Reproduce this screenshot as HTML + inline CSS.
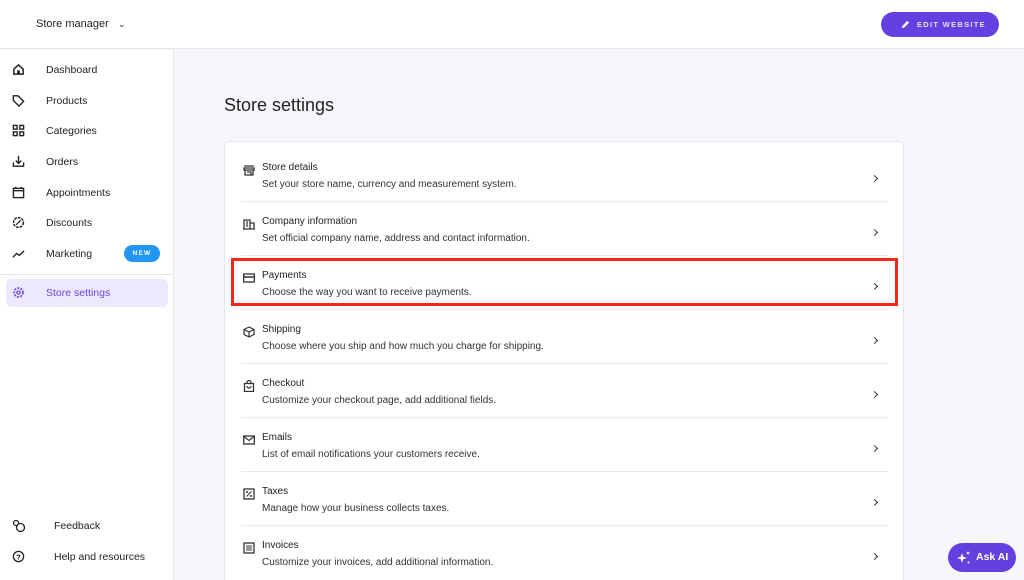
<!DOCTYPE html>
<html><head><meta charset="utf-8"><style>
*{box-sizing:border-box;margin:0;padding:0}
html,body{width:1024px;height:580px;overflow:hidden}
body{font-family:"Liberation Sans",Arial,sans-serif;background:#f6f7fb;color:#222;position:relative}
.hdr{position:absolute;left:0;top:0;width:1024px;height:49px;background:#fff;border-bottom:1px solid #e6e7ec}
.hdr .sm{position:absolute;left:36px;top:18px;font-size:11px;color:#222}
.edit{position:absolute;left:881px;top:12px;width:118px;height:25px;border-radius:13px;background:#6440e0;color:#e8e2ff;font-size:7.5px;font-weight:bold;letter-spacing:1.3px;line-height:25px;padding-left:36px}
.side{position:absolute;left:0;top:50px;width:174px;height:530px;background:#fff;border-right:1px solid #e6e7ec}
.it{position:absolute;left:0;height:20px;width:174px;font-size:10.5px;line-height:20px}
.it span{position:absolute;left:46px}
.it svg{position:absolute;left:12px;top:3px}
.new{position:absolute;left:124px;top:1px;width:36px;height:17px;border-radius:9px;background:#2196f3;color:#fff;font-size:6.5px;font-weight:bold;letter-spacing:1.2px;text-align:center;line-height:17px}
.sel{position:absolute;left:6px;top:229px;width:162px;height:28px;border-radius:5px;background:#ede8fd}
h1{position:absolute;left:224px;top:95px;font-size:18px;font-weight:normal;color:#222}
.card{position:absolute;left:224px;top:141px;width:680px;height:450px;background:#fff;border:1px solid #e6e7ec;border-radius:4px}
.row{position:absolute;left:16px;width:647px;height:54px;border-bottom:1px solid #e8e9ee}
.row .t{position:absolute;left:21px;top:14px;font-size:10px;color:#222}
.row .d{position:absolute;left:21px;top:31px;font-size:10px;color:#333}
.row svg.i{position:absolute;left:2px;top:16px}
.row .ch{position:absolute;right:11px;top:28px;width:5px;height:5px;border-right:1.5px solid #333;border-top:1.5px solid #333;transform:rotate(45deg)}
.red{position:absolute;left:231px;top:258px;width:667px;height:48px;border:3px solid #f4271a}
.ask{position:absolute;left:948px;top:543px;width:68px;height:29px;border-radius:15px;background:#6440e0;color:#fff;font-size:10.5px;font-weight:bold;line-height:29px;padding-left:28px}
</style></head><body>
<div class="hdr"><div class="sm">Store manager &nbsp;&nbsp;<span style="font-size:9px">⌄</span></div>
<div class="edit"><svg style="position:absolute;left:20px;top:8px" width="9" height="9" viewBox="0 0 10 10"><path d="M1 9l0.5-2.5 5.5-5.5 2 2-5.5 5.5z" fill="#fff"/></svg>EDIT WEBSITE</div></div>
<div class="side">
<div class="it" style="top:10px"><svg width="13" height="13" viewBox="0 0 14 14"><path d="M2 6.5L7 2l5 4.5V12H2z" fill="none" stroke="#222" stroke-width="1.6"/><rect x="5.5" y="8" width="3" height="4" fill="#222"/></svg><span>Dashboard</span></div>
<div class="it" style="top:41px"><svg width="13" height="13" viewBox="0 0 14 14"><path d="M1.5 2v5l6 6 5-5-6-6z" fill="none" stroke="#222" stroke-width="1.5"/></svg><span>Products</span></div>
<div class="it" style="top:71px"><svg width="13" height="13" viewBox="0 0 14 14"><g fill="none" stroke="#222" stroke-width="1.5"><rect x="1.5" y="1.5" width="4" height="4"/><rect x="8.5" y="1.5" width="4" height="4"/><rect x="1.5" y="8.5" width="4" height="4"/><rect x="8.5" y="8.5" width="4" height="4"/></g></svg><span>Categories</span></div>
<div class="it" style="top:102px"><svg width="13" height="13" viewBox="0 0 14 14"><path d="M1.5 8v4h11V8M7 1v8M4 6l3 3 3-3" fill="none" stroke="#222" stroke-width="1.5"/></svg><span>Orders</span></div>
<div class="it" style="top:133px"><svg width="13" height="13" viewBox="0 0 14 14"><rect x="1.5" y="2.5" width="11" height="10" fill="none" stroke="#222" stroke-width="1.5"/><path d="M1.5 5h11M4 1v2M10 1v2" stroke="#222" stroke-width="1.5"/></svg><span>Appointments</span></div>
<div class="it" style="top:163px"><svg width="13" height="13" viewBox="0 0 14 14"><circle cx="7" cy="7" r="5.3" fill="none" stroke="#222" stroke-width="1.6" stroke-dasharray="3 1"/><path d="M4.5 9.5l5-5" stroke="#222" stroke-width="1.3"/></svg><span>Discounts</span></div>
<div class="it" style="top:194px"><svg width="13" height="13" viewBox="0 0 14 14"><path d="M1 11l4-4 3 2 5-5" fill="none" stroke="#222" stroke-width="1.5"/></svg><span>Marketing</span><div class="new">NEW</div></div>
<div style="position:absolute;left:0;top:224px;width:174px;border-top:1px solid #e6e7ec"></div>
<div class="sel"></div>
<div class="it" style="top:233px;color:#6a45e0"><svg width="13" height="13" viewBox="0 0 14 14"><circle cx="7" cy="7" r="4.8" fill="none" stroke="#6a45e0" stroke-width="1.8" stroke-dasharray="2.2 1.3"/><circle cx="7" cy="7" r="1.8" fill="none" stroke="#6a45e0" stroke-width="1.3"/></svg><span>Store settings</span></div>
<div class="it" style="top:466px"><svg width="14" height="14" viewBox="0 0 14 14"><circle cx="4" cy="4" r="2.5" fill="none" stroke="#222" stroke-width="1.2"/><circle cx="8.5" cy="8.5" r="4" fill="#fff" stroke="#222" stroke-width="1.3"/></svg><span style="left:54px">Feedback</span></div>
<div class="it" style="top:497px"><svg width="13" height="13" viewBox="0 0 14 14"><circle cx="7" cy="7" r="5.5" fill="none" stroke="#222" stroke-width="1.4"/><text x="7" y="10" font-size="8" text-anchor="middle" font-family="Liberation Sans" font-weight="bold">?</text></svg><span style="left:54px">Help and resources</span></div>
</div>
<h1>Store settings</h1>
<div class="card">
<div class="row" style="top:6px"><svg class="i" width="12" height="12" viewBox="0 0 12 12"><path d="M1 2h10M1 4h10v2H1zM2 6v5h8V6M4 8h4v3" fill="none" stroke="#333" stroke-width="1.3"/></svg><div class="t">Store details</div><div class="d">Set your store name, currency and measurement system.</div><div class="ch"></div></div>
<div class="row" style="top:60px"><svg class="i" width="12" height="12" viewBox="0 0 12 12"><path d="M1 11V2h6v9M7 5h4v6M0 11h12M3 4h2M3 6h2M3 8h2" fill="none" stroke="#333" stroke-width="1.3"/></svg><div class="t">Company information</div><div class="d">Set official company name, address and contact information.</div><div class="ch"></div></div>
<div class="row" style="top:114px"><svg class="i" width="12" height="12" viewBox="0 0 12 12"><rect x="0.7" y="2" width="10.6" height="8" fill="none" stroke="#333" stroke-width="1.3"/><path d="M1 5h10" stroke="#333" stroke-width="1.5"/></svg><div class="t">Payments</div><div class="d">Choose the way you want to receive payments.</div><div class="ch"></div></div>
<div class="row" style="top:168px"><svg class="i" width="12" height="12" viewBox="0 0 12 12"><path d="M6 1l5 2.5v5L6 11 1 8.5v-5zM1 3.5L6 6l5-2.5M6 6v5" fill="none" stroke="#333" stroke-width="1.2"/></svg><div class="t">Shipping</div><div class="d">Choose where you ship and how much you charge for shipping.</div><div class="ch"></div></div>
<div class="row" style="top:222px"><svg class="i" width="12" height="12" viewBox="0 0 12 12"><rect x="1.5" y="3.5" width="9" height="8" fill="none" stroke="#333" stroke-width="1.3"/><path d="M4 3.5V2.5a2 2 0 014 0v1M4 6a2 2 0 004 0" fill="none" stroke="#333" stroke-width="1.2"/></svg><div class="t">Checkout</div><div class="d">Customize your checkout page, add additional fields.</div><div class="ch"></div></div>
<div class="row" style="top:276px"><svg class="i" width="12" height="12" viewBox="0 0 12 12"><rect x="0.7" y="2" width="10.6" height="8" fill="none" stroke="#333" stroke-width="1.3"/><path d="M1 2.5l5 4 5-4" fill="none" stroke="#333" stroke-width="1.2"/></svg><div class="t">Emails</div><div class="d">List of email notifications your customers receive.</div><div class="ch"></div></div>
<div class="row" style="top:330px"><svg class="i" width="12" height="12" viewBox="0 0 12 12"><rect x="1" y="1" width="10" height="10" fill="none" stroke="#333" stroke-width="1.3"/><path d="M3.5 8.5l5-5" stroke="#333" stroke-width="1.1"/><circle cx="4" cy="4" r="1" fill="#333"/><circle cx="8" cy="8" r="1" fill="#333"/></svg><div class="t">Taxes</div><div class="d">Manage how your business collects taxes.</div><div class="ch"></div></div>
<div class="row" style="top:384px;border-bottom:none"><svg class="i" width="12" height="12" viewBox="0 0 12 12"><rect x="1" y="1" width="10" height="10" fill="none" stroke="#333" stroke-width="1.3"/><path d="M3 4h6M3 6h6M3 8h6" stroke="#333" stroke-width="1.1"/></svg><div class="t">Invoices</div><div class="d">Customize your invoices, add additional information.</div><div class="ch"></div></div>
</div>
<div class="red"></div>
<div class="ask"><svg style="position:absolute;left:8px;top:7px" width="16" height="16" viewBox="0 0 16 16"><path d="M6 3l1.2 3.8L11 8l-3.8 1.2L6 13l-1.2-3.8L1 8l3.8-1.2z" fill="#fff"/><path d="M12 1l.6 1.4L14 3l-1.4.6L12 5l-.6-1.4L10 3l1.4-.6zM12.5 11l.5 1 1 .5-1 .5-.5 1-.5-1-1-.5 1-.5z" fill="#fff"/></svg>Ask AI</div>
</body></html>
